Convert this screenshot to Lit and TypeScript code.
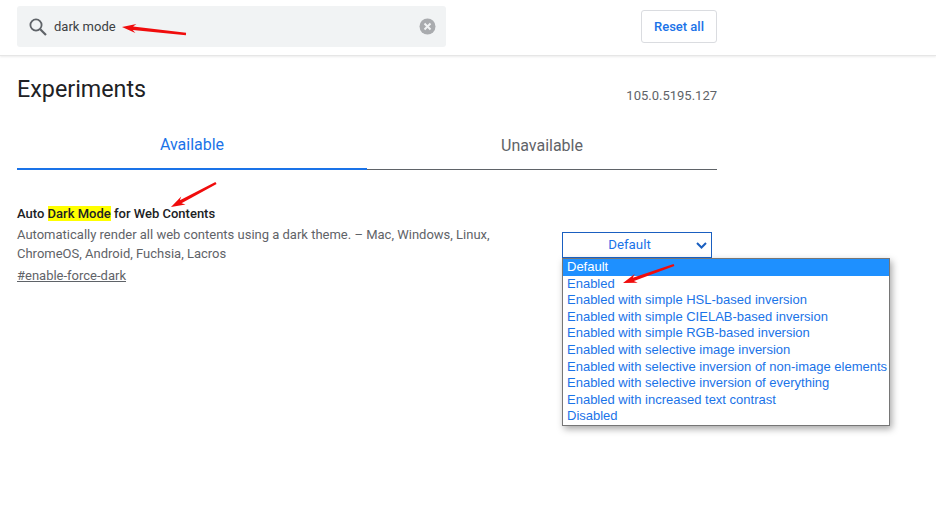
import { LitElement, html, css, svg } from "lit";
import { customElement } from "lit/decorators.js";

const OPTIONS = [
  "Default",
  "Enabled",
  "Enabled with simple HSL-based inversion",
  "Enabled with simple CIELAB-based inversion",
  "Enabled with simple RGB-based inversion",
  "Enabled with selective image inversion",
  "Enabled with selective inversion of non-image elements",
  "Enabled with selective inversion of everything",
  "Enabled with increased text contrast",
  "Disabled",
];

function arrow(x1: number, y1: number, x2: number, y2: number) {
  const dx = x2 - x1, dy = y2 - y1;
  const len = Math.hypot(dx, dy);
  const ux = dx / len, uy = dy / len;
  const nx = -uy, ny = ux;
  const hb = 11;
  const bx = x2 - ux * hb, by = y2 - uy * hb;
  const p = (x: number, y: number) => `${x.toFixed(1)},${y.toFixed(1)}`;
  const pts = [
    p(x1 + nx * 1.2, y1 + ny * 1.2),
    p(bx + nx * 1.7, by + ny * 1.7),
    p(bx - ux * 3 + nx * 4.6, by - uy * 3 + ny * 4.6),
    p(x2, y2),
    p(bx - ux * 3 - nx * 4.6, by - uy * 3 - ny * 4.6),
    p(bx - nx * 1.7, by - ny * 1.7),
    p(x1 - nx * 1.2, y1 - ny * 1.2),
  ].join(" ");
  return svg`<polygon points=${pts} fill="#f00c0c"></polygon>`;
}

@customElement("app-root")
export class AppRoot extends LitElement {
  static styles = css`
    :host {
      display: block;
      position: relative;
      width: 936px;
      height: 525px;
      overflow: hidden;
      background: #fff;
      font-family: Roboto, "Liberation Sans", sans-serif;
      color: #5f6368;
    }
    .header {
      height: 56px;
      box-sizing: border-box;
      padding: 6px 219px 0 17px;
      display: flex;
      justify-content: space-between;
      align-items: flex-start;
      border-bottom: 1px solid #e6e6e6;
      box-shadow: 0 1px 2px rgba(0, 0, 0, 0.08);
    }
    .search {
      width: 429px;
      height: 41px;
      box-sizing: border-box;
      background: #f1f3f4;
      border-radius: 3px;
      display: flex;
      align-items: center;
      padding: 0 10px 0 11px;
      font-size: 13px;
      color: #3c4043;
    }
    .search svg {
      flex: none;
      margin-right: 6px;
    }
    .search span {
      flex: 1;
    }
    .search svg.clear {
      margin: 0;
    }
    .reset {
      margin-top: 4px;
      width: 76px;
      height: 33px;
      box-sizing: border-box;
      border: 1px solid #dadce0;
      border-radius: 3px;
      display: flex;
      align-items: center;
      justify-content: center;
      font-size: 13px;
      font-weight: 500;
      color: #1a73e8;
    }
    .main {
      width: 700px;
      margin-left: 17px;
    }
    .title-row {
      display: flex;
      justify-content: space-between;
      padding-top: 18px;
      height: 52px;
      box-sizing: border-box;
    }
    h1 {
      margin: 0;
      font-size: 23.3px;
      font-weight: 400;
      line-height: 30px;
      color: #202124;
    }
    .version {
      font-size: 13px;
      line-height: 16px;
      margin-top: 14px;
    }
    .tabs {
      display: flex;
      height: 62px;
    }
    .tab {
      width: 350px;
      box-sizing: border-box;
      display: flex;
      align-items: center;
      justify-content: center;
      font-size: 16px;
      padding-top: 14px;
      border-bottom: 1px solid #5f6368;
    }
    .tab.active {
      color: #1a73e8;
      border-bottom: 2px solid #1a73e8;
      padding-top: 13px;
    }
    .flag {
      position: relative;
      padding-top: 36px;
      font-size: 13px;
    }
    .flag-title {
      font-weight: 500;
      color: #202124;
      line-height: 16px;
      font-size: 13px;
    }
    mark {
      background: #ff0;
      color: inherit;
    }
    .desc {
      width: 490px;
      margin-top: 3px;
      line-height: 19px;
    }
    .perma {
      display: block;
      margin-top: 5px;
      line-height: 16px;
      text-decoration: underline;
    }
    .select-wrap {
      position: absolute;
      left: 545px;
      top: 62px;
      z-index: 1;
    }
    .select {
      width: 150px;
      height: 26px;
      box-sizing: border-box;
      border: 1px solid #1a5fc0;
      display: flex;
      align-items: center;
      justify-content: center;
      color: #1a73e8;
      font-size: 13.3px;
      position: relative;
      padding-right: 15px;
      padding-bottom: 1px;
    }
    .select svg {
      position: absolute;
      right: 4px;
      top: 8px;
    }
    .list {
      width: 328px;
      box-sizing: border-box;
      border: 1px solid #767676;
      background: #fff;
      font-family: "Liberation Sans", Arial, sans-serif;
      font-size: 13px;
      color: #1a73e8;
      box-shadow: 2px 3px 7px rgba(0, 0, 0, 0.35);
    }
    .opt {
      height: 16.6px;
      line-height: 16.6px;
      padding-left: 4px;
      white-space: nowrap;
    }
    .opt.sel {
      background: #1e90ff;
      color: #fff;
    }
    .marks {
      position: absolute;
      left: 0;
      top: 0;
      z-index: 2;
      pointer-events: none;
    }
  `;

  render() {
    return html`
      <div class="header">
        <div class="search">
          <svg width="20" height="20" viewBox="0 0 20 20" fill="none" stroke="#5f6368">
            <circle cx="8" cy="8" r="5.6" stroke-width="1.8"></circle>
            <path d="M12.2 12.2 L18 18" stroke-width="2.2"></path>
          </svg>
          <span>dark mode</span>
          <svg class="clear" width="17" height="17" viewBox="0 0 17 17">
            <circle cx="8.5" cy="8.5" r="8" fill="#a9abae"></circle>
            <path d="M5.5 5.5 L11.5 11.5 M11.5 5.5 L5.5 11.5" stroke="#f1f3f4" stroke-width="2"></path>
          </svg>
        </div>
        <div class="reset">Reset all</div>
      </div>
      <div class="main">
        <div class="title-row">
          <h1>Experiments</h1>
          <div class="version">105.0.5195.127</div>
        </div>
        <div class="tabs">
          <div class="tab active">Available</div>
          <div class="tab">Unavailable</div>
        </div>
        <div class="flag">
          <div class="flag-title">Auto <mark>Dark Mode</mark> for Web Contents</div>
          <div class="desc">Automatically render all web contents using a dark theme. – Mac, Windows, Linux, ChromeOS, Android, Fuchsia, Lacros</div>
          <a class="perma">#enable-force-dark</a>
          <div class="select-wrap">
            <div class="select">
              Default
              <svg width="11" height="9" viewBox="0 0 11 9" fill="none">
                <path d="M1 2 L5.5 6.5 L10 2" stroke="#1a5fc0" stroke-width="2"></path>
              </svg>
            </div>
            <div class="list">
              ${OPTIONS.map(
                (o, i) => html`<div class="opt ${i === 0 ? "sel" : ""}">${o}</div>`
              )}
            </div>
          </div>
        </div>
      </div>
      <svg class="marks" width="936" height="525">
        ${arrow(186, 34, 122, 27)} ${arrow(216, 183, 171, 207)} ${arrow(674, 265, 623, 283)}
      </svg>
    `;
  }
}
